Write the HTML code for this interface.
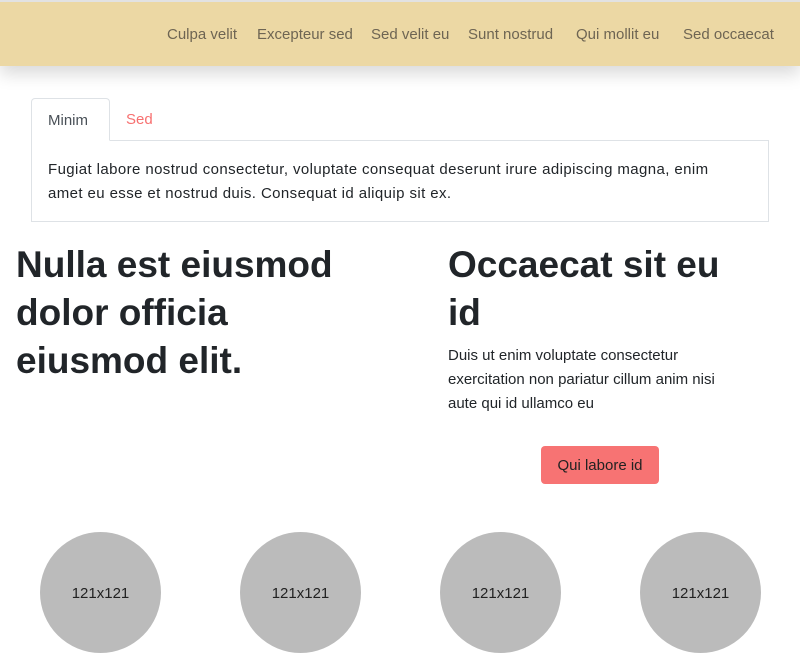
<!DOCTYPE html>
<html><head><meta charset="utf-8"><style>
*{box-sizing:border-box;margin:0;padding:0}
body{width:800px;height:600px;overflow:hidden;font-family:"Liberation Sans",sans-serif;color:#212529;background:#fff;position:relative}
.nav{position:absolute;left:0;top:0;width:800px;height:66px;background:#ecd8a4;border-top:2px solid #e2e2e2;box-shadow:0 8px 16px rgba(0,0,0,.15)}
.nav a{position:absolute;top:24px;font-size:15px;color:#6e6553;text-decoration:none;white-space:nowrap}
.tabs{position:absolute;left:31px;top:98px;width:738px;height:43px;border-bottom:1px solid #dee2e6}
.tab{position:absolute;top:0;height:43px;font-size:15px;line-height:43px;padding:0 16px}
.t1{left:0;width:79px;border:1px solid #dee2e6;border-bottom:1px solid #fff;border-radius:4px 4px 0 0;color:#495057;background:#fff;height:43px}
.t2{left:79px;color:#f77070}
.panel{position:absolute;left:31px;top:140px;width:738px;height:82px;border:1px solid #dee2e6;border-top:none;padding:18px 16px;font-size:15px;line-height:24px;white-space:nowrap;letter-spacing:.4px}
h1{position:absolute;font-weight:700;font-size:37px;line-height:48px;color:#212529;white-space:nowrap}
.p2{position:absolute;left:448px;top:344px;width:300px;font-size:15px;line-height:24px}
.btn{position:absolute;left:541px;top:446px;width:118px;height:38px;background:#f77373;border-radius:4px;font-size:15px;line-height:40px;text-align:center;color:#222}
.c{position:absolute;top:532px;width:121px;height:121px;border-radius:50%;background:#bbb;text-align:center;font-size:15px;line-height:124px;color:#222}
</style></head><body>
<div class="nav">
<a style="left:167px">Culpa velit</a>
<a style="left:257px">Excepteur sed</a>
<a style="left:371px">Sed velit eu</a>
<a style="left:468px">Sunt nostrud</a>
<a style="left:576px">Qui mollit eu</a>
<a style="left:683px">Sed occaecat</a>
</div>
<div class="tabs"><div class="tab t1">Minim</div><div class="tab t2">Sed</div></div>
<div class="panel">Fugiat labore nostrud consectetur, voluptate consequat deserunt irure adipiscing magna, enim<br>amet eu esse et nostrud duis. Consequat id aliquip sit ex.</div>
<h1 style="left:16px;top:241px">Nulla est eiusmod<br>dolor officia<br>eiusmod elit.</h1>
<h1 style="left:448px;top:241px">Occaecat sit eu<br>id</h1>
<div class="p2">Duis ut enim voluptate consectetur<br>exercitation non pariatur cillum anim nisi<br>aute qui id ullamco eu</div>
<div class="btn">Qui labore id</div>
<div class="c" style="left:40px">121x121</div>
<div class="c" style="left:240px">121x121</div>
<div class="c" style="left:440px">121x121</div>
<div class="c" style="left:640px">121x121</div>
</body></html>
